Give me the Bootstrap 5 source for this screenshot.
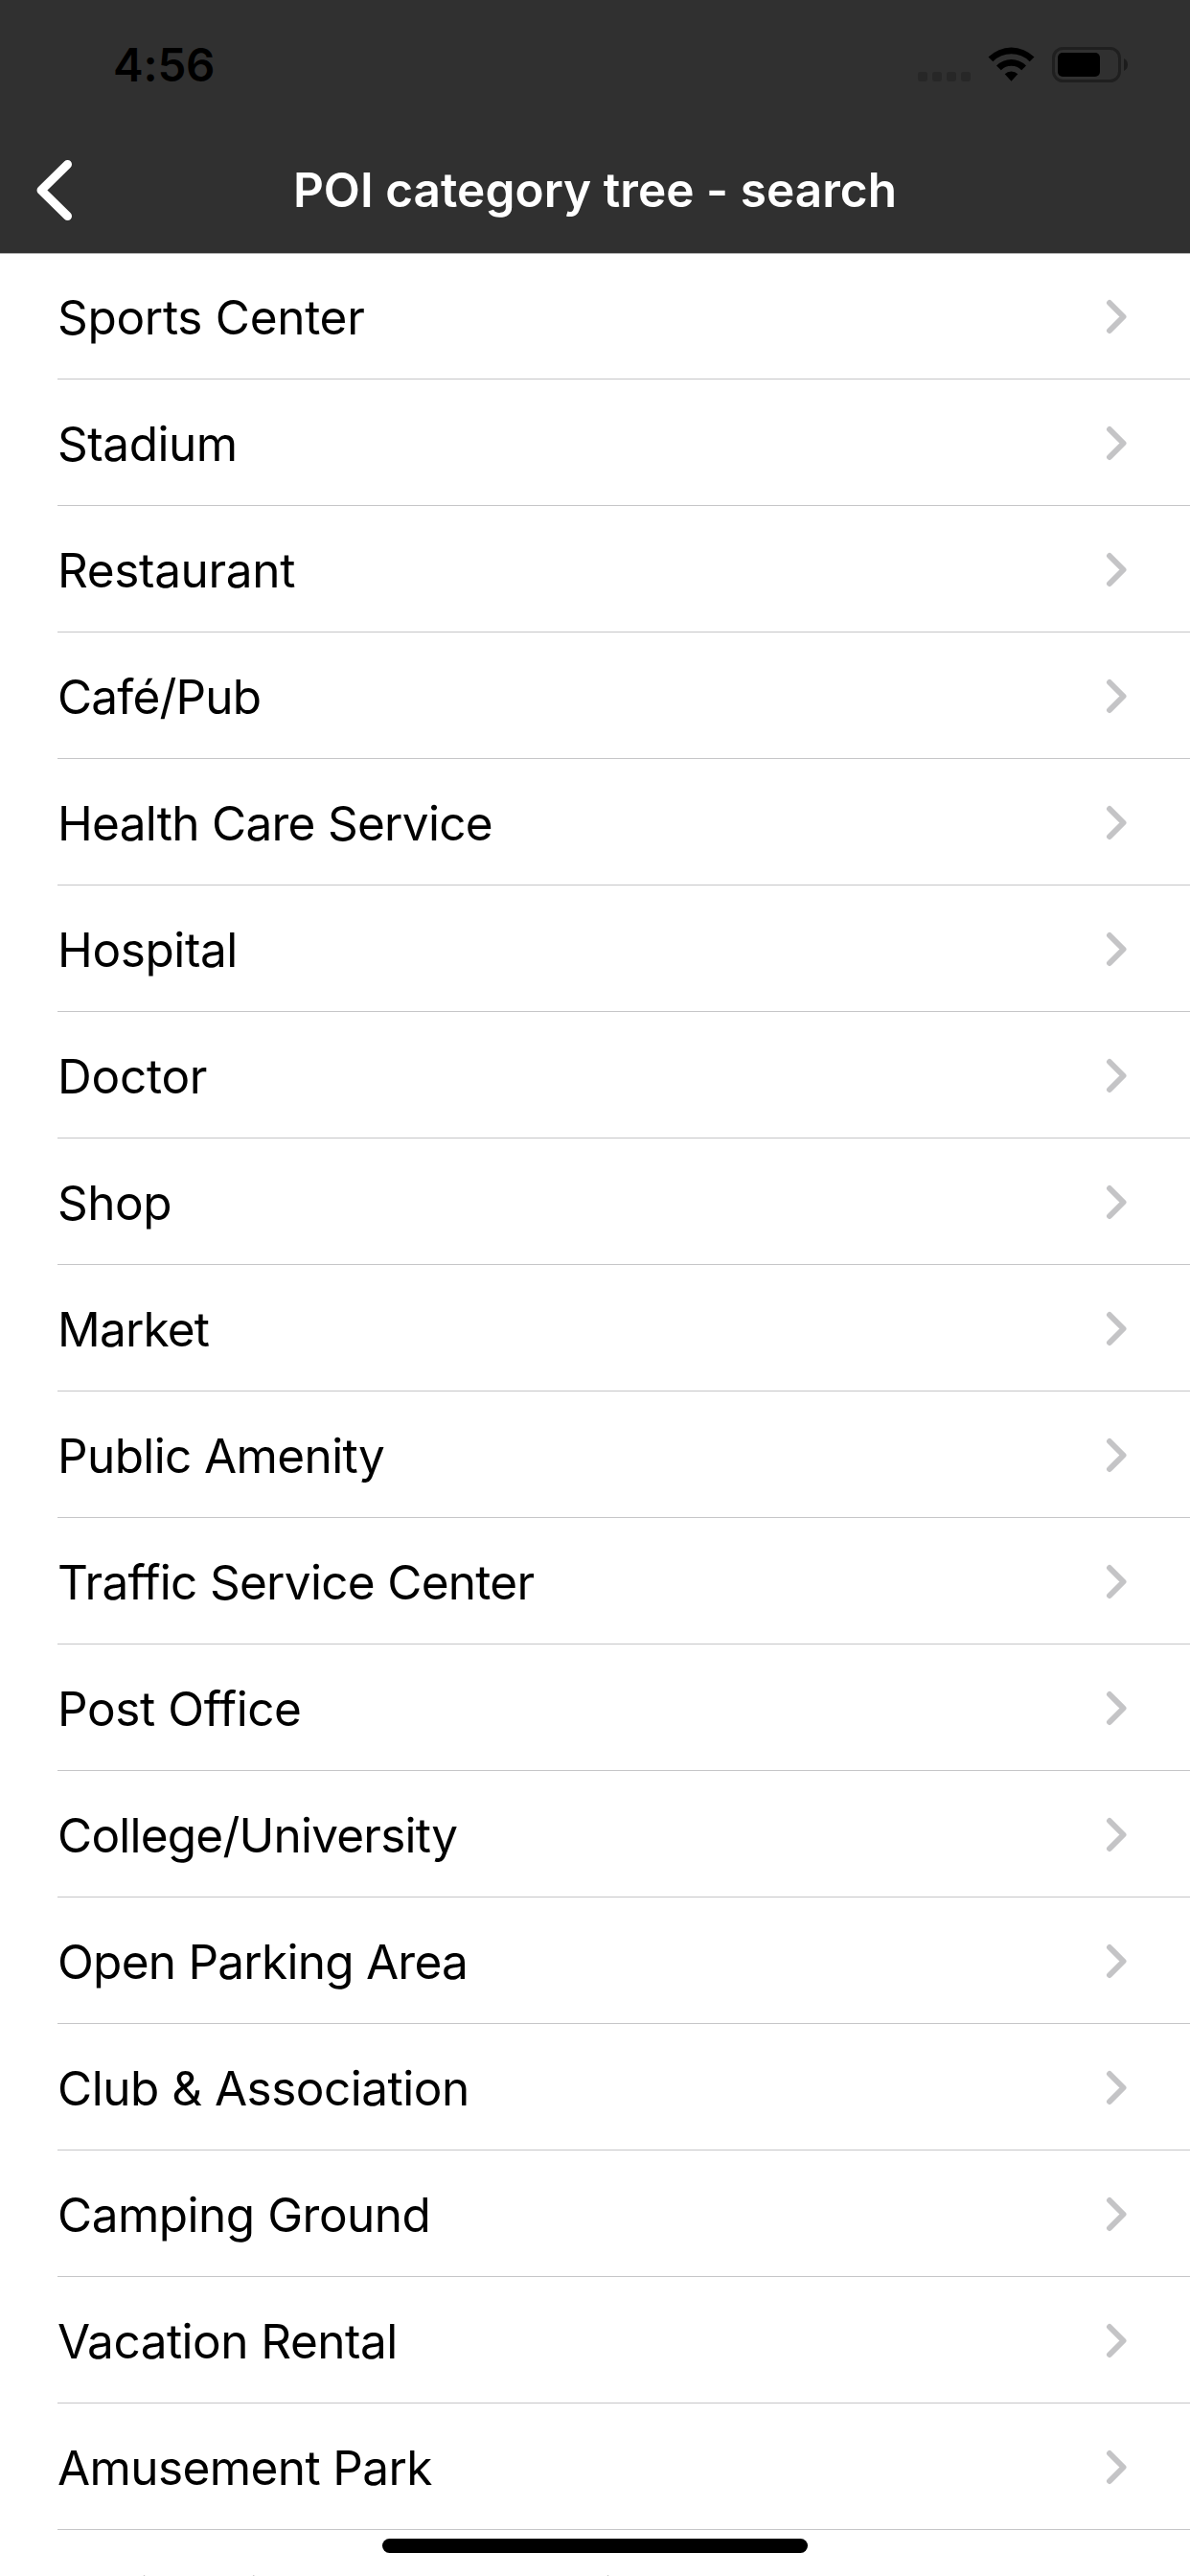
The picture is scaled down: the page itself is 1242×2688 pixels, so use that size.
<!DOCTYPE html>
<html lang="en">
<head>
<meta charset="utf-8">
<meta name="viewport" content="width=device-width, initial-scale=1">
<title>POI category tree - search</title>
<link rel="stylesheet" href="https://cdn.jsdelivr.net/npm/bootstrap@5.3.0/dist/css/bootstrap.min.css">
<style>
  body { font-family: Inter, "Liberation Sans", sans-serif; font-size: 49.5px; line-height: 60px; color: #000; }
  .screen { height: 2688px; }
  .top-area { background: #303030; border-bottom: 1px solid #b2b2b2; height: 265px; margin-bottom: -1px; }
  .status { height: 132px; padding: 0 64px 0 118px; }
  .clock { font-size: 47.5px; font-weight: 600; letter-spacing: -.2px; padding-top: 4px; }
  .titlebar { height: 132px; padding: 0 36px; }
  .heading { font-size: 49.5px; font-weight: 600; letter-spacing: .05px; line-height: 60px; }
  .side { width: 60px; }
  .poi { height: 132px; margin-left: 60px; padding: 2px 65px 0 0; border: 0; border-bottom: 1px solid #c6c6c8; background: transparent; color: #000; border-radius: 0; }
  .list-group-flush > .poi:last-child { border-bottom-width: 1px; }
  .home-bar { width: 444px; height: 15px; bottom: 24px; background: #000; border-radius: 8px; }
</style>
</head>
<body>
<div class="screen position-relative overflow-hidden bg-white">
  <header class="top-area text-white">
    <div class="status d-flex justify-content-between align-items-center">
      <div class="clock text-black">4:56</div>
      <svg width="222" height="40" viewBox="956 46 222 40">
        <g fill="#272727"><rect x="958" y="75" width="10" height="10" rx="3"/><rect x="973" y="75" width="10" height="10" rx="3"/><rect x="988" y="75" width="10" height="10" rx="3"/><rect x="1003" y="75" width="10" height="10" rx="3"/></g>
        <path d="M1031.500 59.500a34 34 0 0 1 48 0l-4.800 4.700a27.300 27.300 0 0 0-38.400 0zM1040 68.500a22 22 0 0 1 31 0l-4.800 4.700a15.200 15.200 0 0 0-21.400 0zM1048.700 77.300a9.600 9.600 0 0 1 13.600 0l-6.800 7.500z"/>
        <rect x="1099.500" y="50.500" width="69" height="34" rx="10" fill="none" stroke="#1f1f1f" stroke-width="3"/>
        <rect x="1104" y="55" width="44" height="25" rx="5"/>
        <path d="M1173 61q4 2 4 6.500t-4 6.500z" fill="#1c1c1c"/>
      </svg>
    </div>
    <nav class="titlebar d-flex align-items-center justify-content-between">
      <a href="#" class="side d-flex" aria-label="Back"><svg width="42" height="66" viewBox="36 165 42 66"><path d="M70.500 171.500L43 198.500l27.500 27" fill="none" stroke="#fff" stroke-width="9" stroke-linecap="round" stroke-linejoin="round"/></svg></a>
      <h1 class="heading m-0">POI category tree - search</h1>
      <div class="side"></div>
    </nav>
  </header>
  <main class="list-group list-group-flush" id="categories"></main>
  <div class="home-bar position-absolute start-50 translate-middle-x"></div>
</div>
<script src="https://cdn.jsdelivr.net/npm/bootstrap@5.3.0/dist/js/bootstrap.bundle.min.js"></script>
<script>
  // Each category: label and letter spacing in pixels
  const categories = [
    ["Sports Center", -.3], ["Stadium", -.45], ["Restaurant", -.35], ["Café/Pub", -.8],
    ["Health Care Service", -.72], ["Hospital", -.4], ["Doctor", -.25], ["Shop", -.5],
    ["Market", -.8], ["Public Amenity", -.62], ["Traffic Service Center", -.7], ["Post Office", -.4],
    ["College/University", -.78], ["Open Parking Area", -.75], ["Club & Association", -.5],
    ["Camping Ground", -.5], ["Vacation Rental", -.52], ["Amusement Park", -.6], ["Residential Accommodation", -.5]
  ];
  const list = document.getElementById("categories");
  for (const [name, tracking] of categories) {
    const row = document.createElement("a");
    row.className = "poi list-group-item d-flex align-items-center justify-content-between flex-shrink-0";
    const label = document.createElement("span");
    label.textContent = name;
    label.style.letterSpacing = tracking + "px";
    row.append(label);
    row.insertAdjacentHTML("beforeend", '<svg width="23" height="38" viewBox="0 0 23 38"><path d="M4 4L18.500 18.500 4 33" fill="none" stroke="#c4c4c6" stroke-width="6" stroke-linecap="round" stroke-linejoin="round"/></svg>');
    list.append(row);
  }
</script>
</body>
</html>
